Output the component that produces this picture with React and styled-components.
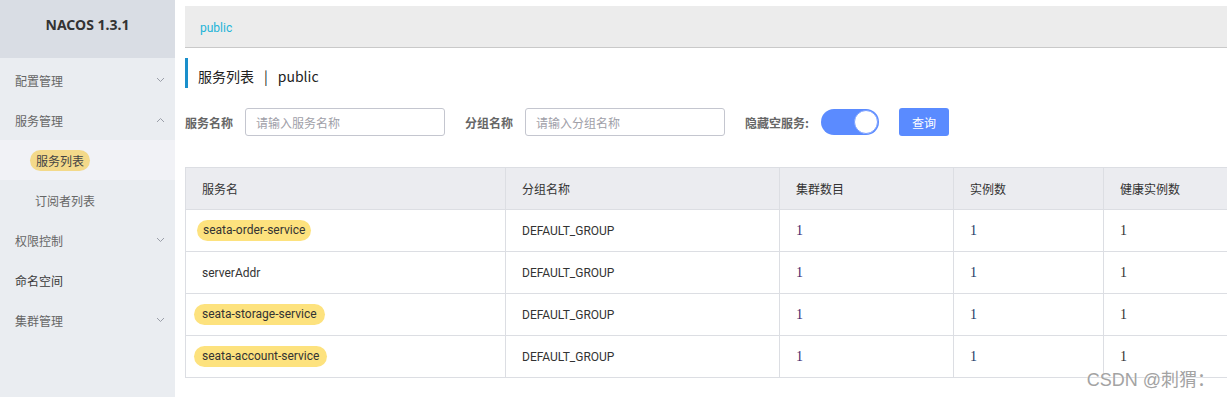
import React from 'react';
import styled, { createGlobalStyle } from 'styled-components';

const GlobalStyle = createGlobalStyle`
  html, body {
    margin: 0;
    padding: 0;
    background: #fff;
    font-family: Roboto, "Noto Sans CJK SC", sans-serif;
    font-size: 12px;
    color: #333;
  }
`;

const Page = styled.div`
  display: flex;
  width: 1227px;
  height: 397px;
  overflow: hidden;
  position: relative;
`;

const Sidebar = styled.aside`
  width: 175px;
  flex: none;
  background: #eaedf1;
  display: flex;
  flex-direction: column;
`;

const Brand = styled.div`
  height: 58px;
  background: #d9dde4;
  display: flex;
  align-items: flex-start;
  justify-content: center;
  padding-top: 15px;
  box-sizing: border-box;
  font-family: "Noto Sans", sans-serif;
  font-weight: 700;
  font-size: 14px;
  color: #333;
`;

const MenuList = styled.nav`
  display: flex;
  flex-direction: column;
  padding-top: 2px;
`;

const MenuItem = styled.div`
  height: 40px;
  display: flex;
  align-items: center;
  justify-content: space-between;
  padding: 0 10px 0 15px;
  font-family: "Noto Sans CJK SC", sans-serif;
  font-size: 12px;
  color: ${props => props.strong ? '#3a3a3a' : '#666'};
`;

const SubMenu = styled.div`
  display: flex;
  flex-direction: column;
`;

const SubItem = styled.div`
  height: 40px;
  display: flex;
  align-items: center;
  padding-left: 30px;
  background: ${props => props.active ? '#f1f2f6' : 'transparent'};
  font-family: "Noto Sans CJK SC", sans-serif;
  font-size: 12px;
  color: #666;
  span {
    padding: ${props => props.active ? '2px 6px' : '0 5px'};
    border-radius: 11px;
    background: ${props => props.active ? '#f3d98a' : 'transparent'};
    color: ${props => props.active ? '#444' : '#666'};
  }
`;

const Main = styled.main`
  flex: 1;
  min-width: 0;
  padding: 6px 0 0 10px;
  display: flex;
  flex-direction: column;
  overflow: hidden;
`;

const TopBar = styled.div`
  height: 42px;
  flex: none;
  box-sizing: border-box;
  padding: 3px 0 0 15px;
  background: #ececec;
  border-bottom: 1px solid #c9c9c9;
  display: flex;
  align-items: center;
  color: #22b4d8;
  font-size: 12px;
`;

const Title = styled.h1`
  margin: 10px 0 0;
  height: 30px;
  box-sizing: border-box;
  padding: 5px 0 0 10px;
  border-left: 3px solid #1a8fcb;
  display: flex;
  align-items: center;
  font-family: "Noto Sans CJK SC", sans-serif;
  font-size: 14px;
  font-weight: 400;
  color: #222;
  gap: 10px;
`;

const Filters = styled.form`
  margin-top: 20px;
  display: flex;
  align-items: center;
  height: 28px;
`;

const Field = styled.label`
  display: flex;
  align-items: center;
  gap: 12px;
  margin-right: 20px;
  font-family: "Noto Sans CJK SC", sans-serif;
  font-weight: 700;
  font-size: 12px;
  color: #666;
`;

const Input = styled.input`
  width: 200px;
  height: 28px;
  box-sizing: border-box;
  border: 1px solid #c4c6cf;
  border-radius: 3px;
  padding: 0 10px;
  font-family: "Noto Sans CJK SC", sans-serif;
  font-size: 12px;
  outline: none;
  &::placeholder {
    color: #a0a0a8;
  }
`;

const Switch = styled.span`
  width: 58px;
  height: 26px;
  border-radius: 13px;
  background: #5b8bff;
  display: flex;
  align-items: center;
  justify-content: flex-end;
  padding: 1px;
  box-sizing: border-box;
  &::after {
    content: '';
    width: 24px;
    height: 24px;
    border-radius: 50%;
    background: #fff;
    box-sizing: border-box;
    border: 1px solid #7aa0ff;
  }
`;

const Button = styled.button`
  width: 50px;
  height: 28px;
  border: none;
  border-radius: 3px;
  background: #5a8bff;
  color: #fff;
  font-family: "Noto Sans CJK SC", sans-serif;
  font-size: 12px;
  padding: 0;
`;

const Table = styled.table`
  margin-top: 31px;
  width: 1070px;
  border-collapse: collapse;
  table-layout: fixed;
  font-size: 12px;
  th, td {
    border: 1px solid #dcdee3;
    padding: 0 16px;
    text-align: left;
    white-space: nowrap;
  }
  th {
    height: 41px;
    background: #ebecf0;
    font-weight: 400;
    font-family: "Noto Sans CJK SC", sans-serif;
    color: #333;
  }
  td {
    height: 41px;
    color: #333;
  }
`;

const Pill = styled.span`
  display: inline-block;
  margin-left: ${props => props.wide ? '-8px' : '-5px'};
  padding: 3px ${props => props.wide ? '8px' : '6px'} 4px;
  border-radius: 12px;
  background: #fde27e;
`;

const Count = styled.span`
  font-family: "Liberation Serif", serif;
  font-size: 14px;
  color: ${props => props.tone || '#333'};
`;

const Watermark = styled.div`
  position: absolute;
  right: 12px;
  bottom: 6px;
  font-family: "Liberation Sans", "Noto Sans CJK SC", sans-serif;
  font-size: 18px;
  color: #a3a3a3;
  text-shadow: 0 0 2px #fff;
`;

const Chevron = ({ up }) => (
  <svg width="9" height="6" viewBox="0 0 9 6">
    <polyline
      points={up ? '1,5 4.5,1.5 8,5' : '1,1 4.5,4.5 8,1'}
      fill="none"
      stroke="#9a9ea8"
      strokeWidth="1"
    />
  </svg>
);

const rows = [
  { name: 'seata-order-service', pill: true },
  { name: 'serverAddr' },
  { name: 'seata-storage-service', pill: true, wide: true },
  { name: 'seata-account-service', pill: true, wide: true },
];

export default function App() {
  return (
    <Page>
      <GlobalStyle />
      <Sidebar>
        <Brand>NACOS 1.3.1</Brand>
        <MenuList>
          <MenuItem>配置管理<Chevron /></MenuItem>
          <MenuItem>服务管理<Chevron up /></MenuItem>
          <SubMenu>
            <SubItem active><span>服务列表</span></SubItem>
            <SubItem><span>订阅者列表</span></SubItem>
          </SubMenu>
          <MenuItem>权限控制<Chevron /></MenuItem>
          <MenuItem strong>命名空间</MenuItem>
          <MenuItem>集群管理<Chevron /></MenuItem>
        </MenuList>
      </Sidebar>
      <Main>
        <TopBar>public</TopBar>
        <Title>
          <span>服务列表</span>
          <span>|</span>
          <span>public</span>
        </Title>
        <Filters onSubmit={e => e.preventDefault()}>
          <Field>服务名称<Input placeholder="请输入服务名称" /></Field>
          <Field>分组名称<Input placeholder="请输入分组名称" /></Field>
          <Field>隐藏空服务:<Switch /></Field>
          <Button type="submit">查询</Button>
        </Filters>
        <Table>
          <colgroup>
            <col style={{ width: 320 }} />
            <col style={{ width: 274 }} />
            <col style={{ width: 174 }} />
            <col style={{ width: 150 }} />
            <col style={{ width: 152 }} />
          </colgroup>
          <thead>
            <tr>
              <th>服务名</th>
              <th>分组名称</th>
              <th>集群数目</th>
              <th>实例数</th>
              <th>健康实例数</th>
            </tr>
          </thead>
          <tbody>
            {rows.map(r => (
              <tr key={r.name}>
                <td>{r.pill ? <Pill wide={r.wide}>{r.name}</Pill> : r.name}</td>
                <td>DEFAULT_GROUP</td>
                <td><Count tone="#3e2a6e">1</Count></td>
                <td><Count tone="#233b66">1</Count></td>
                <td><Count>1</Count></td>
              </tr>
            ))}
          </tbody>
        </Table>
      </Main>
      <Watermark>CSDN @刺猬：</Watermark>
    </Page>
  );
}
